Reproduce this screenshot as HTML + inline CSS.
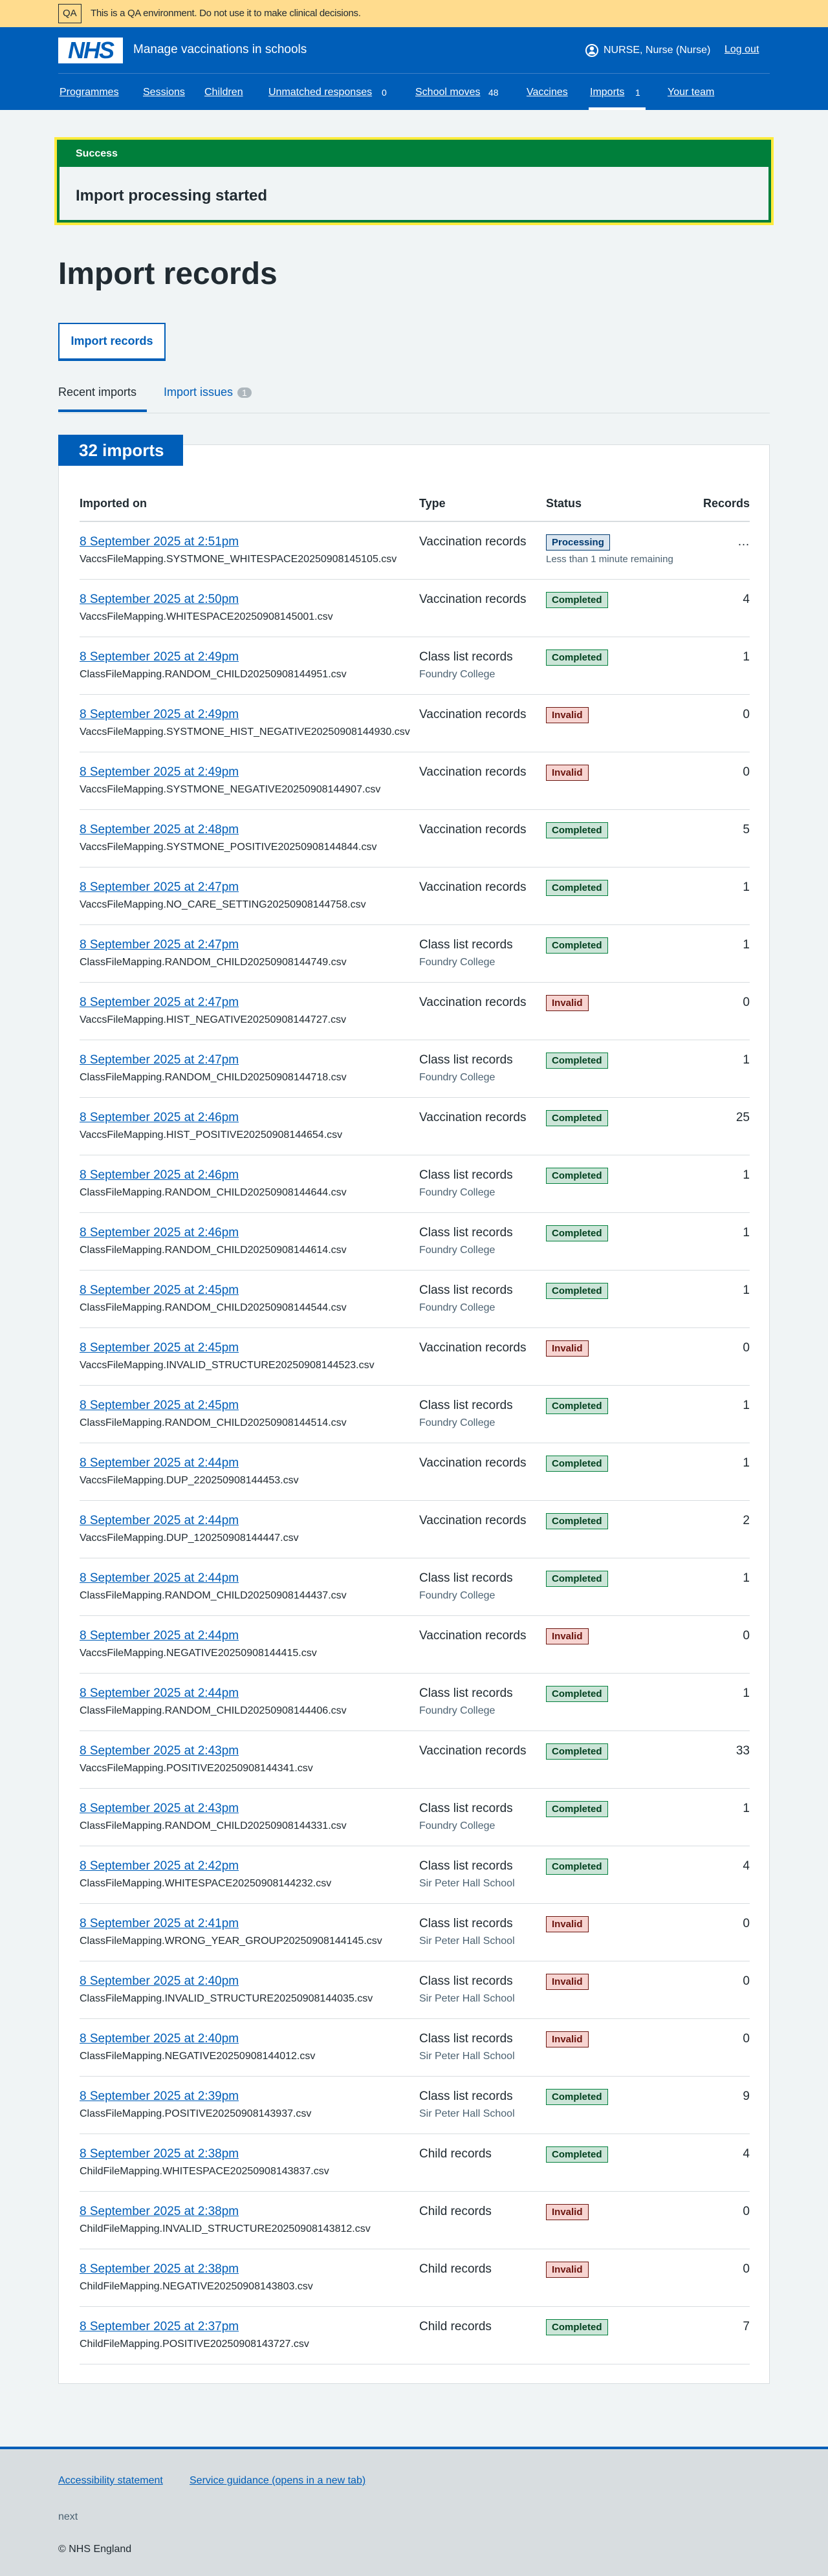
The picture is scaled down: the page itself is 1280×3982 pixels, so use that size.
<!DOCTYPE html>
<html><head><meta charset="utf-8">
<style>
*{box-sizing:border-box;margin:0;padding:0}
body{width:1280px;height:3982px;background:#f0f4f5;font-family:"Liberation Sans",sans-serif;color:#212b32;position:relative;overflow:hidden}
a{color:#005eb8;text-decoration:underline}
.qa{height:42px;background:#ffdc8e;position:relative}
.qa .b{position:absolute;left:90px;top:6px;border:1px solid #212b32;font-size:15px;padding:4px 6px;line-height:20px}
.qa .t{position:absolute;left:140px;top:12px;font-size:15px;letter-spacing:-0.3px}
.hd{height:128px;background:#005eb8;position:relative;color:#fff}
.logo{position:absolute;left:90px;top:16px;width:100px;height:40px;background:#fff;color:#005eb8;font:italic bold 36px/40px "Liberation Sans",sans-serif;text-align:center;letter-spacing:-2px}
.svc{position:absolute;left:206px;top:24px;font-size:19px}
.usr{position:absolute;left:905px;top:25px;font-size:16px;display:flex;align-items:center;gap:8px}
.lo{position:absolute;left:1120px;top:26px;font-size:16px;color:#fff}
.hline{position:absolute;left:90px;right:90px;top:71px;border-top:1px solid #3d7fc7}
.nav a{position:absolute;top:92px;font-size:16px;color:#fff;text-decoration:underline}
.nav span{position:absolute;top:93px;font-size:14px;color:#fff}
.act{position:absolute;left:910px;top:124px;width:88px;height:4px;background:#fff}
.ok{position:absolute;left:88px;top:216px;width:1104px;height:128px;border:4px solid #007f3b;outline:4px solid #ffeb3b;background:#f0f4f5}
.ok .h{background:#007f3b;color:#fff;font-weight:bold;font-size:16px;height:38px;line-height:36px;padding-left:25px}
.ok .m{font-size:24px;font-weight:bold;padding:31px 0 0 25px}
h1{position:absolute;left:90px;top:396px;font-size:48px;line-height:56px;font-weight:bold}
.btn{position:absolute;left:90px;top:499px;width:166px;height:59px;border:2px solid #005eb8;border-bottom-width:4px;background:#fff;color:#005eb8;font-size:18px;font-weight:bold;line-height:52px;text-align:center}
.tabs{position:absolute;left:90px;top:596px;width:1100px;height:43px;border-bottom:1px solid #d8dde0;font-size:18px}
.tabs .r{position:absolute;left:0;top:0;width:137px;height:41px;border-bottom:4px solid #005eb8}
.tabs .i{position:absolute;left:163px;top:0;color:#005eb8}
.tabs .c{display:inline-block;background:#aeb7bd;color:#fff;border-radius:12px;padding:0 7px;font-size:14px;margin-left:2px}
.card{position:absolute;left:90px;top:687px;width:1100px;height:2998px;background:#fff;border:1px solid #d8dde0}
.cnt{position:absolute;left:90px;top:672px;width:193px;height:48px;background:#005eb8;color:#fff;font-size:26px;font-weight:bold;line-height:48px;padding-left:32px}
table{position:absolute;left:32px;top:64px;width:1036px;border-collapse:collapse}
th{text-align:left;font-size:18px;font-weight:bold;height:54px;vertical-align:middle;border-bottom:2px solid #d8dde0;padding-bottom:0}
td{border-bottom:1px solid #d8dde0;vertical-align:top;padding:18px 0 16px;height:89px}
td .d{font-size:19px;line-height:26px;display:block}
td .f{font-size:16px;line-height:28px;display:block}
td .s{font-size:16px;line-height:28px;display:block;color:#4c6272}
td.ty{font-size:19px;line-height:26px}
.tag{display:inline-block;font-size:15px;font-weight:bold;padding:0 8px;height:25px;line-height:23px;border:1px solid;margin-top:1px}
.C{background:#cce5d8;border-color:#007f3b;color:#00401e}
.I{background:#f7d4d1;border-color:#6b140e;color:#6b140e}
.P{background:#dbe6f0;border-color:#003a70;color:#003a70}
td.n{text-align:right;font-size:19px;line-height:26px}
.ft{position:absolute;left:0;top:3782px;width:1280px;height:200px;background:#d8dde0;border-top:4px solid #005eb8}
.ft a{position:absolute;top:40px;font-size:16px}
.ft .nx{position:absolute;left:90px;top:96px;font-size:16px;color:#4c6272}
.ft .cp{position:absolute;left:90px;top:146px;font-size:16px}
</style></head><body>
<div class="qa"><span class="b">QA</span><span class="t">This is a QA environment. Do not use it to make clinical decisions.</span></div>
<div class="hd">
<div class="logo">NHS</div>
<div class="svc">Manage vaccinations in schools</div>
<div class="usr"><svg width="20" height="22" viewBox="0 0 20 22"><circle cx="10" cy="11" r="9" fill="none" stroke="#fff" stroke-width="2"/><circle cx="10" cy="8" r="3.2" fill="#fff"/><path d="M4.5 17c1-3.5 3-4.5 5.5-4.5s4.5 1 5.5 4.5" fill="#fff"/></svg>NURSE, Nurse (Nurse)</div>
<a class="lo">Log out</a>
<div class="hline"></div>
<div class="nav">
<a style="left:92px">Programmes</a><a style="left:221px">Sessions</a><a style="left:316px">Children</a><a style="left:415px">Unmatched responses</a><span style="left:590px">0</span><a style="left:642px">School moves</a><span style="left:755px">48</span><a style="left:814px">Vaccines</a><a style="left:912px">Imports</a><span style="left:982px">1</span><a style="left:1032px">Your team</a>
</div>
<div class="act"></div>
</div>
<div class="ok"><div class="h">Success</div><div class="m">Import processing started</div></div>
<h1>Import records</h1>
<div class="btn">Import records</div>
<div class="tabs"><div class="r">Recent imports</div><div class="i">Import issues <span class="c">1</span></div></div>
<div class="card">
<table>
<tr><th style="width:525px">Imported on</th><th style="width:196px">Type</th><th>Status</th><th style="text-align:right">Records</th></tr>
<tr><td><a class="d">8 September 2025 at 2:51pm</a><span class="f">VaccsFileMapping.SYSTMONE_WHITESPACE20250908145105.csv</span></td><td class="ty">Vaccination records</td><td><span class="tag P">Processing</span><span class="s" style="font-size:15px">Less than 1 minute remaining</span></td><td class="n">…</td></tr>
<tr><td><a class="d">8 September 2025 at 2:50pm</a><span class="f">VaccsFileMapping.WHITESPACE20250908145001.csv</span></td><td class="ty">Vaccination records</td><td><span class="tag C">Completed</span></td><td class="n">4</td></tr>
<tr><td><a class="d">8 September 2025 at 2:49pm</a><span class="f">ClassFileMapping.RANDOM_CHILD20250908144951.csv</span></td><td class="ty">Class list records<span class="s">Foundry College</span></td><td><span class="tag C">Completed</span></td><td class="n">1</td></tr>
<tr><td><a class="d">8 September 2025 at 2:49pm</a><span class="f">VaccsFileMapping.SYSTMONE_HIST_NEGATIVE20250908144930.csv</span></td><td class="ty">Vaccination records</td><td><span class="tag I">Invalid</span></td><td class="n">0</td></tr>
<tr><td><a class="d">8 September 2025 at 2:49pm</a><span class="f">VaccsFileMapping.SYSTMONE_NEGATIVE20250908144907.csv</span></td><td class="ty">Vaccination records</td><td><span class="tag I">Invalid</span></td><td class="n">0</td></tr>
<tr><td><a class="d">8 September 2025 at 2:48pm</a><span class="f">VaccsFileMapping.SYSTMONE_POSITIVE20250908144844.csv</span></td><td class="ty">Vaccination records</td><td><span class="tag C">Completed</span></td><td class="n">5</td></tr>
<tr><td><a class="d">8 September 2025 at 2:47pm</a><span class="f">VaccsFileMapping.NO_CARE_SETTING20250908144758.csv</span></td><td class="ty">Vaccination records</td><td><span class="tag C">Completed</span></td><td class="n">1</td></tr>
<tr><td><a class="d">8 September 2025 at 2:47pm</a><span class="f">ClassFileMapping.RANDOM_CHILD20250908144749.csv</span></td><td class="ty">Class list records<span class="s">Foundry College</span></td><td><span class="tag C">Completed</span></td><td class="n">1</td></tr>
<tr><td><a class="d">8 September 2025 at 2:47pm</a><span class="f">VaccsFileMapping.HIST_NEGATIVE20250908144727.csv</span></td><td class="ty">Vaccination records</td><td><span class="tag I">Invalid</span></td><td class="n">0</td></tr>
<tr><td><a class="d">8 September 2025 at 2:47pm</a><span class="f">ClassFileMapping.RANDOM_CHILD20250908144718.csv</span></td><td class="ty">Class list records<span class="s">Foundry College</span></td><td><span class="tag C">Completed</span></td><td class="n">1</td></tr>
<tr><td><a class="d">8 September 2025 at 2:46pm</a><span class="f">VaccsFileMapping.HIST_POSITIVE20250908144654.csv</span></td><td class="ty">Vaccination records</td><td><span class="tag C">Completed</span></td><td class="n">25</td></tr>
<tr><td><a class="d">8 September 2025 at 2:46pm</a><span class="f">ClassFileMapping.RANDOM_CHILD20250908144644.csv</span></td><td class="ty">Class list records<span class="s">Foundry College</span></td><td><span class="tag C">Completed</span></td><td class="n">1</td></tr>
<tr><td><a class="d">8 September 2025 at 2:46pm</a><span class="f">ClassFileMapping.RANDOM_CHILD20250908144614.csv</span></td><td class="ty">Class list records<span class="s">Foundry College</span></td><td><span class="tag C">Completed</span></td><td class="n">1</td></tr>
<tr><td><a class="d">8 September 2025 at 2:45pm</a><span class="f">ClassFileMapping.RANDOM_CHILD20250908144544.csv</span></td><td class="ty">Class list records<span class="s">Foundry College</span></td><td><span class="tag C">Completed</span></td><td class="n">1</td></tr>
<tr><td><a class="d">8 September 2025 at 2:45pm</a><span class="f">VaccsFileMapping.INVALID_STRUCTURE20250908144523.csv</span></td><td class="ty">Vaccination records</td><td><span class="tag I">Invalid</span></td><td class="n">0</td></tr>
<tr><td><a class="d">8 September 2025 at 2:45pm</a><span class="f">ClassFileMapping.RANDOM_CHILD20250908144514.csv</span></td><td class="ty">Class list records<span class="s">Foundry College</span></td><td><span class="tag C">Completed</span></td><td class="n">1</td></tr>
<tr><td><a class="d">8 September 2025 at 2:44pm</a><span class="f">VaccsFileMapping.DUP_220250908144453.csv</span></td><td class="ty">Vaccination records</td><td><span class="tag C">Completed</span></td><td class="n">1</td></tr>
<tr><td><a class="d">8 September 2025 at 2:44pm</a><span class="f">VaccsFileMapping.DUP_120250908144447.csv</span></td><td class="ty">Vaccination records</td><td><span class="tag C">Completed</span></td><td class="n">2</td></tr>
<tr><td><a class="d">8 September 2025 at 2:44pm</a><span class="f">ClassFileMapping.RANDOM_CHILD20250908144437.csv</span></td><td class="ty">Class list records<span class="s">Foundry College</span></td><td><span class="tag C">Completed</span></td><td class="n">1</td></tr>
<tr><td><a class="d">8 September 2025 at 2:44pm</a><span class="f">VaccsFileMapping.NEGATIVE20250908144415.csv</span></td><td class="ty">Vaccination records</td><td><span class="tag I">Invalid</span></td><td class="n">0</td></tr>
<tr><td><a class="d">8 September 2025 at 2:44pm</a><span class="f">ClassFileMapping.RANDOM_CHILD20250908144406.csv</span></td><td class="ty">Class list records<span class="s">Foundry College</span></td><td><span class="tag C">Completed</span></td><td class="n">1</td></tr>
<tr><td><a class="d">8 September 2025 at 2:43pm</a><span class="f">VaccsFileMapping.POSITIVE20250908144341.csv</span></td><td class="ty">Vaccination records</td><td><span class="tag C">Completed</span></td><td class="n">33</td></tr>
<tr><td><a class="d">8 September 2025 at 2:43pm</a><span class="f">ClassFileMapping.RANDOM_CHILD20250908144331.csv</span></td><td class="ty">Class list records<span class="s">Foundry College</span></td><td><span class="tag C">Completed</span></td><td class="n">1</td></tr>
<tr><td><a class="d">8 September 2025 at 2:42pm</a><span class="f">ClassFileMapping.WHITESPACE20250908144232.csv</span></td><td class="ty">Class list records<span class="s">Sir Peter Hall School</span></td><td><span class="tag C">Completed</span></td><td class="n">4</td></tr>
<tr><td><a class="d">8 September 2025 at 2:41pm</a><span class="f">ClassFileMapping.WRONG_YEAR_GROUP20250908144145.csv</span></td><td class="ty">Class list records<span class="s">Sir Peter Hall School</span></td><td><span class="tag I">Invalid</span></td><td class="n">0</td></tr>
<tr><td><a class="d">8 September 2025 at 2:40pm</a><span class="f">ClassFileMapping.INVALID_STRUCTURE20250908144035.csv</span></td><td class="ty">Class list records<span class="s">Sir Peter Hall School</span></td><td><span class="tag I">Invalid</span></td><td class="n">0</td></tr>
<tr><td><a class="d">8 September 2025 at 2:40pm</a><span class="f">ClassFileMapping.NEGATIVE20250908144012.csv</span></td><td class="ty">Class list records<span class="s">Sir Peter Hall School</span></td><td><span class="tag I">Invalid</span></td><td class="n">0</td></tr>
<tr><td><a class="d">8 September 2025 at 2:39pm</a><span class="f">ClassFileMapping.POSITIVE20250908143937.csv</span></td><td class="ty">Class list records<span class="s">Sir Peter Hall School</span></td><td><span class="tag C">Completed</span></td><td class="n">9</td></tr>
<tr><td><a class="d">8 September 2025 at 2:38pm</a><span class="f">ChildFileMapping.WHITESPACE20250908143837.csv</span></td><td class="ty">Child records</td><td><span class="tag C">Completed</span></td><td class="n">4</td></tr>
<tr><td><a class="d">8 September 2025 at 2:38pm</a><span class="f">ChildFileMapping.INVALID_STRUCTURE20250908143812.csv</span></td><td class="ty">Child records</td><td><span class="tag I">Invalid</span></td><td class="n">0</td></tr>
<tr><td><a class="d">8 September 2025 at 2:38pm</a><span class="f">ChildFileMapping.NEGATIVE20250908143803.csv</span></td><td class="ty">Child records</td><td><span class="tag I">Invalid</span></td><td class="n">0</td></tr>
<tr><td><a class="d">8 September 2025 at 2:37pm</a><span class="f">ChildFileMapping.POSITIVE20250908143727.csv</span></td><td class="ty">Child records</td><td><span class="tag C">Completed</span></td><td class="n">7</td></tr>
</table>
</div>
<div class="cnt">32 imports</div>
<div class="ft">
<a style="left:90px">Accessibility statement</a><a style="left:293px">Service guidance (opens in a new tab)</a>
<div class="nx">next</div>
<div class="cp">© NHS England</div>
</div>
</body></html>
